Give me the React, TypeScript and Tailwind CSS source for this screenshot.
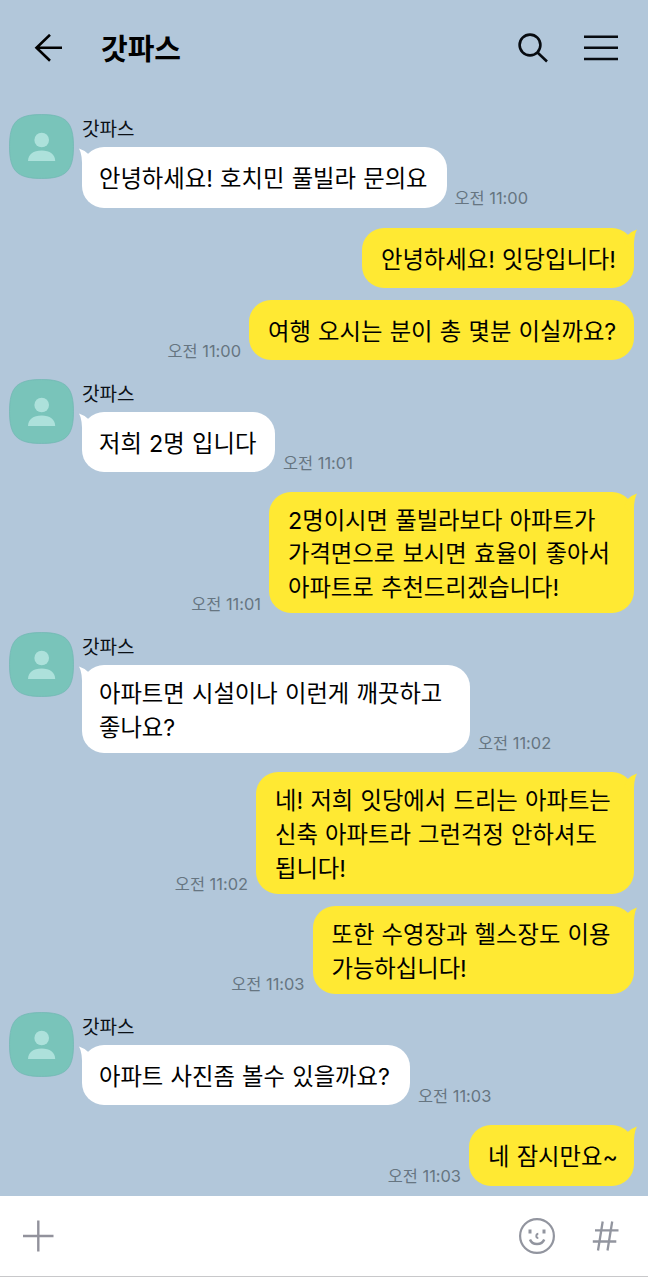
type Message = {
  lines: string[];
  width: string;
  gap: string;
  time?: string;
  mine?: boolean;
  tail?: boolean;
};

const messages: Message[] = [
  { lines: ['안녕하세요! 호치민 풀빌라 문의요'], width: 'w-[364.5px]', gap: '', time: '11:00' },
  { lines: ['안녕하세요! 잇당입니다!'], width: 'w-[272px]', gap: 'mt-5', mine: true, tail: true },
  { lines: ['여행 오시는 분이 총 몇분 이실까요?'], width: 'w-[385px]', gap: 'mt-[11.5px]', time: '11:00', mine: true },
  { lines: ['저희 2명 입니다'], width: 'w-[193px]', gap: 'mt-[18.5px]', time: '11:01' },
  {
    lines: ['2명이시면 풀빌라보다 아파트가', '가격면으로 보시면 효율이 좋아서', '아파트로 추천드리겠습니다!'],
    width: 'w-[365px]',
    gap: 'mt-[19.5px]',
    time: '11:01',
    mine: true,
    tail: true,
  },
  { lines: ['아파트면 시설이나 이런게 깨끗하고', '좋나요?'], width: 'w-[388px]', gap: 'mt-[18.5px]', time: '11:02' },
  {
    lines: ['네! 저희 잇당에서 드리는 아파트는', '신축 아파트라 그런걱정 안하셔도', '됩니다!'],
    width: 'w-[378px]',
    gap: 'mt-[19.5px]',
    time: '11:02',
    mine: true,
    tail: true,
  },
  {
    lines: ['또한 수영장과 헬스장도 이용', '가능하십니다!'],
    width: 'w-[321.5px]',
    gap: 'mt-[12px]',
    time: '11:03',
    mine: true,
    tail: true,
  },
  { lines: ['아파트 사진좀 볼수 있을까요?'], width: 'w-[328px]', gap: 'mt-[18px]', time: '11:03' },
  { lines: ['네 잠시만요~'], width: 'w-[165px]', gap: 'mt-5', time: '11:03', mine: true, tail: true },
];

function Avatar() {
  return (
    <svg className="h-[65px] w-[65px] shrink-0" viewBox="0 0 65 65">
      <path
        d="M32.5 .5C57 .5 64.5 8 64.5 32.5S57 64.5 32.5 64.5.5 57 .5 32.5 8 .5 32.5.5Z"
        fill="#79c4ba"
        stroke="#70b6b1"
        strokeWidth=".7"
      />
      <circle cx="32.7" cy="26" r="7.3" fill="#ade1db" />
      <path d="M19 47c.3-6.700 5.200-10.500 13.600-10.500S45.900 40.300 46.200 47Z" fill="#ade1db" />
    </svg>
  );
}

function Tail({ mine }: { mine?: boolean }) {
  return (
    <svg
      className={`absolute top-0 h-6 w-6 ${mine ? '-right-1 -scale-x-100 text-[#ffe933]' : '-left-1 text-white'}`}
      viewBox="0 0 24 24"
      fill="currentColor"
    >
      <path d="M1 1.500Q5.500 2.800 10.500 7.200L14 15L4 23Q4.600 7.500 1 1.500Z" />
    </svg>
  );
}

function Bubble({ message }: { message: Message }) {
  const { lines, width, mine, tail } = message;
  return (
    <div
      className={`relative flex min-h-[60.5px] shrink-0 flex-col justify-center rounded-[22px] py-[10.25px] ${width} ${
        mine ? 'bg-[#ffe933] pl-[19px]' : 'bg-white pl-[17px]'
      }`}
    >
      {(tail || !mine) && <Tail mine={mine} />}
      {lines.map((line) => (
        <p
          key={line}
          className="relative top-[2px] font-['Inter','Noto_Sans_CJK_KR',sans-serif] text-[23.3px] leading-[33.7px] whitespace-nowrap text-black [word-spacing:0.7px]"
        >
          {line}
        </p>
      ))}
    </div>
  );
}

function Time({ value }: { value: string }) {
  return (
    <span className="mb-[0.5px] font-['Inter','Noto_Sans_CJK_KR',sans-serif] text-[16.4px] leading-[18px] whitespace-nowrap text-[#667581]">
      오전 {value}
    </span>
  );
}

function Row({ message }: { message: Message }) {
  if (message.mine) {
    return (
      <div className={`flex items-end justify-end gap-2 pr-[14px] ${message.gap}`}>
        {message.time && <Time value={message.time} />}
        <Bubble message={message} />
      </div>
    );
  }
  return (
    <div className={`flex items-start gap-2 pl-[9px] ${message.gap}`}>
      <Avatar />
      <div>
        <p className="h-[33px] text-[19px] leading-[28px] text-[#0b1016]">갓파스</p>
        <div className="flex items-end gap-2">
          <Bubble message={message} />
          {message.time && <Time value={message.time} />}
        </div>
      </div>
    </div>
  );
}

export default function App() {
  return (
    <div className="flex h-[1277px] w-[648px] flex-col overflow-hidden bg-[#b2c7da] font-['Noto_Sans_CJK_KR',sans-serif]">
      <header className="flex h-[96px] shrink-0 items-center pr-[29px] pl-[34px]">
        <svg className="h-7 w-7" viewBox="0 0 28 28" fill="none" stroke="#000" strokeWidth="2.600">
          <path d="M16 .8L2.500 13.700L16 26.800M2.500 13.700H28" />
        </svg>
        <h1 className="mb-[3px] ml-[39px] text-[29px] leading-10 font-bold text-black">갓파스</h1>
        <svg className="ml-auto h-8 w-8" viewBox="0 0 32 32" fill="none" stroke="#070b10" strokeWidth="2.600">
          <circle cx="13" cy="13" r="10.400" />
          <path d="M20.500 20.500L30 29.500" />
        </svg>
        <svg className="ml-[35px] h-7 w-[35px]" viewBox="0 0 35 28" stroke="#070b10" strokeWidth="2.500">
          <path d="M0 2.700H34M0 13.700H34M0 25H34" />
        </svg>
      </header>

      <main className="flex-1 pt-[18px]">
        {messages.map((message) => (
          <Row key={message.lines[0]} message={message} />
        ))}
      </main>

      <footer className="flex h-[81px] shrink-0 items-center border-b border-[#c8c8ca] bg-white pr-[29px] pl-[22px]">
        <svg className="h-8 w-8" viewBox="0 0 32 32" stroke="#92929c" strokeWidth="2.400">
          <path d="M1 16H31.500M16.300 .5V31.500" />
        </svg>
        <svg
          className="ml-auto h-[38px] w-[38px]"
          viewBox="0 0 38 38"
          fill="none"
          stroke="#92959f"
          strokeWidth="2.200"
        >
          <circle cx="19" cy="19" r="16.900" />
          <path d="M12 12.500v4M26 12.500v4" strokeWidth="3" />
          <path d="M20.300 16.700c-2.400.2-2.800 4.300 0 4.300" strokeWidth="2" />
          <path d="M12 22.500C14 28.400 24 28.400 26.200 22.500" strokeWidth="2.400" />
        </svg>
        <svg className="ml-[36px] h-8 w-[27px]" viewBox="0 0 27 32" stroke="#92959f" strokeWidth="2.300">
          <path d="M10.700 1.500L6 30.500M20.200 1.500L15.500 30.500M3 10.300H26.500M.8 21.500H24.300" />
        </svg>
      </footer>
    </div>
  );
}
